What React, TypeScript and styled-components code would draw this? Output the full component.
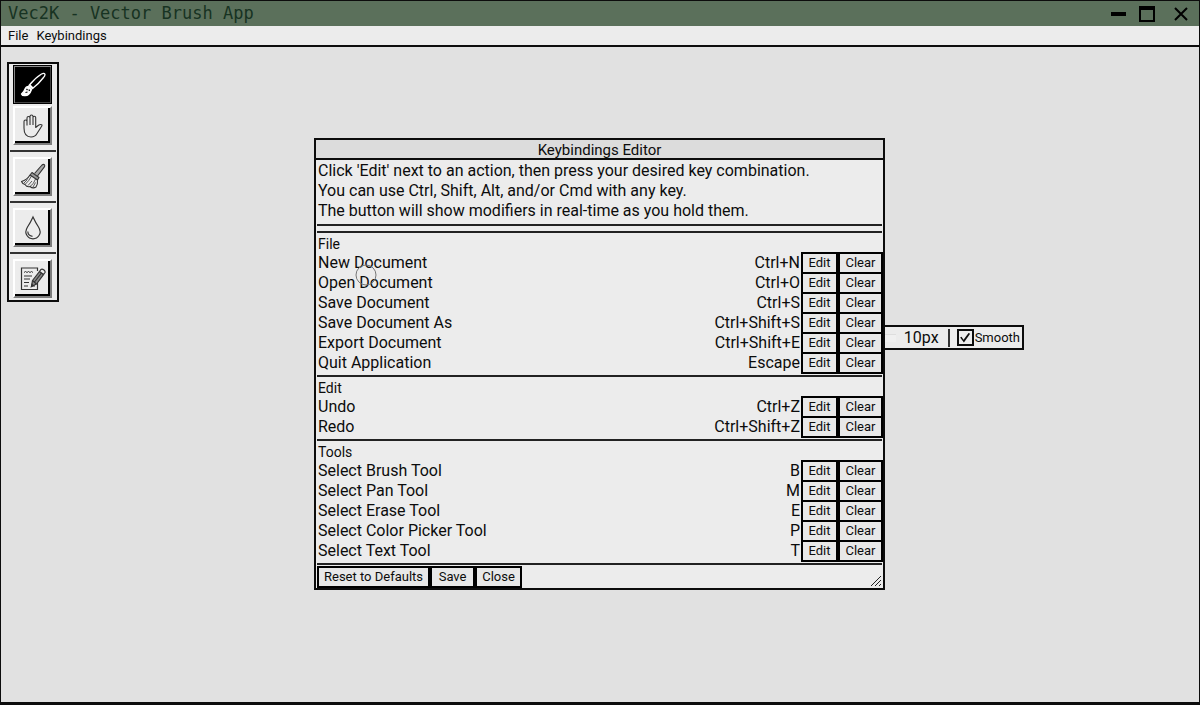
import React from "react";
import styled, { createGlobalStyle, css } from "styled-components";

const GlobalStyle = createGlobalStyle`
  *, *::before, *::after { box-sizing: border-box; }
  html, body, #root { height: 100%; }
  body { margin: 0; }
  button, input { font: inherit; color: inherit; margin: 0; }
`;

const ink = "#0c0c0c";
const face = "#ececec";

const Frame = styled.div`
  display: flex;
  flex-direction: column;
  height: 100%;
  border: 1px solid ${ink};
  border-bottom-width: 3px;
  font-family: Roboto, "Liberation Sans", sans-serif;
  color: ${ink};
  background: #e1e1e1;
  overflow: hidden;
`;

const TitleBar = styled.header`
  display: flex;
  align-items: center;
  justify-content: space-between;
  height: 25px;
  padding: 0 7px;
  background: #5b705b;
`;

const AppTitle = styled.h1`
  margin: 0;
  font: 400 17px/25px "DejaVu Sans Mono", "Liberation Mono", monospace;
  color: #173322;
`;

const WindowControls = styled.div`
  display: flex;
  gap: 13px;
`;

const WindowButton = styled.button`
  display: flex;
  padding: 0;
  border: 0;
  background: none;
`;

const MenuBar = styled.nav`
  display: flex;
  gap: 8px;
  height: 21px;
  padding: 0 7px;
  border-bottom: 2px solid ${ink};
  background: ${face};
`;

const MenuItem = styled.button`
  padding: 0;
  border: 0;
  background: none;
  font-size: 13px;
  line-height: 20px;
`;

const Workspace = styled.main`
  position: relative;
  flex: 1;
  padding: 15px 6px;
`;

const Palette = styled.div`
  display: flex;
  flex-direction: column;
  width: 52px;
  padding: 1px 1px 2px;
  border: 2px solid ${ink};
  background: ${face};
`;

const ToolGroup = styled.div`
  display: flex;
  flex-direction: column;
  gap: 2px;
  padding-left: 3px;

  & + & {
    margin-top: 5px;
    padding-top: 5px;
    border-top: 2px solid #333;
  }
`;

const ToolButton = styled.button<{ $active?: boolean }>`
  display: flex;
  align-items: center;
  justify-content: center;
  width: 39px;
  height: 39px;
  padding: 0;
  border: 2px solid;
  border-color: #fff #7d7d7d #7d7d7d #fff;
  background: ${face};
  color: #333;
  box-shadow: inset -2px -2px 0 #000;
  ${(p) =>
    p.$active &&
    css`
      border-width: 1px;
      border-color: #000;
      background: #000;
      color: #fff;
      box-shadow: inset 1px 1px 0 #888, inset -1px -1px 0 #444;
    `}
`;

const OptionsBar = styled.div`
  position: absolute;
  top: 278px;
  right: 175px;
  display: flex;
  align-items: center;
  height: 25px;
  padding: 0 2px;
  border: 2px solid ${ink};
  background: ${face};
`;

const SizeSlider = styled.input`
  appearance: none;
  width: 100px;
  height: 8px;
  background: #f0f0f0;
  border-top: 1px solid #dedede;
`;

const SizeValue = styled.output`
  padding: 0 9px 0 8px;
  font-size: 16px;
  line-height: 20px;
`;

const OptionRule = styled.span`
  width: 2px;
  height: 18px;
  margin-right: 7px;
  background: #333;
`;

const CheckLabel = styled.label`
  display: flex;
  align-items: center;
  gap: 1px;
  font-size: 13px;
`;

const CheckBox = styled.input`
  appearance: none;
  display: grid;
  place-items: center;
  width: 17px;
  height: 17px;
  border: 2px solid ${ink};

  &:checked::before {
    content: "";
    width: 10px;
    height: 10px;
    background: ${ink};
    clip-path: polygon(0 50%, 14% 42%, 34% 72%, 84% 4%, 100% 12%, 38% 100%);
  }
`;

const Dialog = styled.section`
  position: absolute;
  top: 91px;
  left: 50%;
  width: 571px;
  margin-left: -286px;
  border: 2px solid ${ink};
  background: ${face};
`;

const DialogTitle = styled.h2`
  height: 20px;
  margin: 0;
  border-bottom: 2px solid ${ink};
  background: #dcdcdc;
  font-size: 15px;
  font-weight: 400;
  line-height: 20px;
  text-align: center;
`;

const Intro = styled.p`
  margin: 0 1px 5px;
  padding: 1px 1px 3px;
  border-bottom: 2px solid #222;
  font-size: 16px;
  line-height: 20px;
`;

const Section = styled.div`
  padding-bottom: 2px;
`;

const Bindings = styled.table`
  width: 100%;
  border-spacing: 0;
  font-size: 16px;
  line-height: 20px;

  th, td {
    height: 20px;
    padding: 0;
    font-weight: 400;
    text-align: left;
  }
`;

const Caption = styled.caption`
  height: 22px;
  padding: 4px 2px 0;
  font-size: 14px;
  line-height: 18px;
  text-align: left;
  background: linear-gradient(#222, #222) center top / calc(100% - 2px) 2px no-repeat;
`;

const NameCell = styled.th`
  && { padding-left: 2px; }
`;

const ComboCell = styled.td`
  && { padding-right: 1px; text-align: right; }
`;

const ActionsCell = styled.td`
  width: 82px;
`;

const Actions = styled.div`
  display: flex;
  height: 20px;
  align-items: center;
`;

const PushButton = styled.button<{ $width?: number }>`
  flex: none;
  width: ${(p) => (p.$width ? `${p.$width}px` : "auto")};
  height: 22px;
  padding: 0 ${(p) => (p.$width ? 0 : 5)}px;
  border: 2px solid #000;
  background: #e8e8e8;
  font-size: 13px;
  line-height: 18px;
  white-space: nowrap;
`;

const Footer = styled.footer`
  display: flex;
  position: relative;
  margin: 0 1px;
  padding-top: 1px;
  border-top: 2px solid #222;
`;

const Grip = styled.svg`
  position: absolute;
  right: 0;
  bottom: 1px;
`;

const BrushCursor = styled.svg`
  position: absolute;
  top: 217px;
  left: 50%;
  margin-left: -245px;
  pointer-events: none;
`;

const BrushIcon = () => (
  <svg width="26" height="26" viewBox="0 0 26 26" fill="none" stroke="currentColor" strokeWidth="1.3" strokeLinejoin="round">
    <path d="M9 13.500 Q15 6 21.500 2 Q24.500 0.500 25 2.500 Q25 4 23.500 5.500 Q19 11.500 12.500 16.500 Z" />
    <path d="M9.500 13 L13 16.500" strokeWidth="2" />
    <path d="M8.500 14.500 Q6 14.500 5 17 Q4 20 1.500 22 Q2 23.800 5 23.700 Q9.500 23.500 11.500 17.500 Z" fill="currentColor" />
    <path d="M6.500 17 l1 1 M9 17.500 l0.500 1.500 M5.500 20.500 l2 -0.500" stroke="#000" strokeWidth="1.2" />
  </svg>
);

const HandIcon = () => (
  <svg width="22" height="26" viewBox="0 0 22 26" fill="none" stroke="currentColor" strokeWidth="1.1" strokeLinejoin="round">
    <path d="M2 15 V8.500 Q2 7 3.500 7 Q5 7 5 8.500 V12.500 M5 10 V5 Q5 3.500 6.500 3.500 Q8 3.500 8 5 V12 M8 9 V3.500 Q8 2 9.500 2 Q11 2 11 3.500 V12 M11 9 V4.500 Q11 3.200 12.300 3.200 Q13.700 3.200 13.700 4.500 V14.500 L16.500 12.300 Q18.500 11 20 12 Q20.300 12.800 19 14.200 L15 20.500 Q13 24 9 24 Q2 24 2 15" />
  </svg>
);

const BroomIcon = () => (
  <svg width="26" height="27" viewBox="0 0 26 27" fill="none" stroke="currentColor" strokeWidth="1.1" strokeLinejoin="round">
    <path d="M14.500 10.500 L22 2 Q23.500 0.800 24.500 1.800 Q25.200 2.800 24.200 4.200 L17.500 13" fill="#aaa" />
    <path d="M12 9.500 L19 14.500 L17.500 17 L10 12 Z" fill="#999" />
    <path d="M10 12 Q7 17 1.500 18.500 Q2.500 21 5 21.500 Q7 24.500 10 23.500 Q13 26 16 24 Q18 21 17.500 17" />
    <path d="M11.500 13 Q9 18 5 21.500 M15.500 16 Q14 21 10 23.500 M7.500 16.500 L4 20 M12 18 L8 22.500 M15.500 19.500 L13 24" strokeWidth="0.8" />
  </svg>
);

const DropIcon = () => (
  <svg width="20" height="26" viewBox="0 0 20 26" fill="none" stroke="currentColor" strokeWidth="1.2">
    <path d="M10 2 Q12.500 7.500 15.500 12 Q18.500 17 16 20.500 Q14 23.800 10 23.800 Q6 23.800 4 20.500 Q1.500 17 4.500 12 Q7.500 7.500 10 2 Z" />
    <path d="M4.800 16.500 Q5 20.800 9.500 21.300" />
  </svg>
);

const NoteIcon = () => (
  <svg width="26" height="26" viewBox="0 0 26 26" fill="none" stroke="currentColor" strokeWidth="1.2">
    <path d="M17.500 5 V2 H1.500 V23.500 H17.500 V17" />
    <path d="M4 6.500 l1.500 -1 l1.500 1 l1.500 -1 l1.500 1 l1.500 -1 l1.500 1 M4 10 h8 M4 13 h6 M4 16.500 h5 M4 20 h4 M11 20 h4" strokeWidth="1" />
    <path d="M12.500 14.500 L19.500 5.500 L23.500 8.500 L16.500 18 L11.500 20.500 Z" fill="#888" />
    <path d="M19.500 5.500 L21 3.500 Q22 2.500 24 4 Q25.500 5.500 25 6.500 L23.500 8.500 Z" fill="#ececec" />
    <path d="M14.500 16 L21.500 7 M12.500 14.500 L16.500 18 M11.500 20.500 l0.500 -2 l1 1 Z" />
  </svg>
);

const sections = [
  {
    title: "File",
    rows: [
      ["New Document", "Ctrl+N"],
      ["Open Document", "Ctrl+O"],
      ["Save Document", "Ctrl+S"],
      ["Save Document As", "Ctrl+Shift+S"],
      ["Export Document", "Ctrl+Shift+E"],
      ["Quit Application", "Escape"],
    ],
  },
  {
    title: "Edit",
    rows: [
      ["Undo", "Ctrl+Z"],
      ["Redo", "Ctrl+Shift+Z"],
    ],
  },
  {
    title: "Tools",
    rows: [
      ["Select Brush Tool", "B"],
      ["Select Pan Tool", "M"],
      ["Select Erase Tool", "E"],
      ["Select Color Picker Tool", "P"],
      ["Select Text Tool", "T"],
    ],
  },
];

export default function App() {
  return (
    <>
      <GlobalStyle />
      <Frame>
        <TitleBar>
          <AppTitle>Vec2K - Vector Brush App</AppTitle>
          <WindowControls>
            <WindowButton aria-label="Minimize">
              <svg width="16" height="16"><path d="M1 8 H16" stroke="#000" strokeWidth="4" /></svg>
            </WindowButton>
            <WindowButton aria-label="Maximize">
              <svg width="16" height="16"><path d="M1 1 H15 V15 H1 Z M1 3 H15" fill="none" stroke="#000" strokeWidth="2" /></svg>
            </WindowButton>
            <WindowButton aria-label="Close window">
              <svg width="24" height="16"><path d="M7 2 L19 14 M19 2 L7 14" stroke="#000" strokeWidth="2" /></svg>
            </WindowButton>
          </WindowControls>
        </TitleBar>
        <MenuBar>
          <MenuItem>File</MenuItem>
          <MenuItem>Keybindings</MenuItem>
        </MenuBar>
        <Workspace>
          <Palette role="toolbar" aria-label="Tools">
            <ToolGroup>
              <ToolButton $active aria-label="Brush"><BrushIcon /></ToolButton>
              <ToolButton aria-label="Pan"><HandIcon /></ToolButton>
            </ToolGroup>
            <ToolGroup>
              <ToolButton aria-label="Erase"><BroomIcon /></ToolButton>
            </ToolGroup>
            <ToolGroup>
              <ToolButton aria-label="Color picker"><DropIcon /></ToolButton>
            </ToolGroup>
            <ToolGroup>
              <ToolButton aria-label="Text"><NoteIcon /></ToolButton>
            </ToolGroup>
          </Palette>
          <OptionsBar>
            <SizeSlider type="range" aria-label="Brush size" min={1} max={100} defaultValue={10} />
            <SizeValue>10px</SizeValue>
            <OptionRule />
            <CheckLabel>
              <CheckBox type="checkbox" defaultChecked />
              Smooth
            </CheckLabel>
          </OptionsBar>
          <Dialog role="dialog" aria-labelledby="dialog-title">
            <DialogTitle id="dialog-title">Keybindings Editor</DialogTitle>
            <Intro>
              Click 'Edit' next to an action, then press your desired key combination.
              <br />
              You can use Ctrl, Shift, Alt, and/or Cmd with any key.
              <br />
              The button will show modifiers in real-time as you hold them.
            </Intro>
            {sections.map((section) => (
              <Section key={section.title}>
                <Bindings>
                  <Caption>{section.title}</Caption>
                  <tbody>
                    {section.rows.map(([name, combo]) => (
                      <tr key={name}>
                        <NameCell scope="row">{name}</NameCell>
                        <ComboCell>{combo}</ComboCell>
                        <ActionsCell>
                          <Actions>
                            <PushButton $width={37}>Edit</PushButton>
                            <PushButton $width={45}>Clear</PushButton>
                          </Actions>
                        </ActionsCell>
                      </tr>
                    ))}
                  </tbody>
                </Bindings>
              </Section>
            ))}
            <Footer>
              <PushButton>Reset to Defaults</PushButton>
              <PushButton $width={45}>Save</PushButton>
              <PushButton $width={47}>Close</PushButton>
              <Grip width="12" height="12" aria-hidden="true">
                <path d="M1 11 L11 1 M5 11 L11 5 M9 11 L11 9" stroke="#222" fill="none" />
              </Grip>
            </Footer>
          </Dialog>
          <BrushCursor width="22" height="22" aria-hidden="true">
            <circle cx="11" cy="11" r="10" fill="none" stroke="#777" />
          </BrushCursor>
        </Workspace>
      </Frame>
    </>
  );
}
